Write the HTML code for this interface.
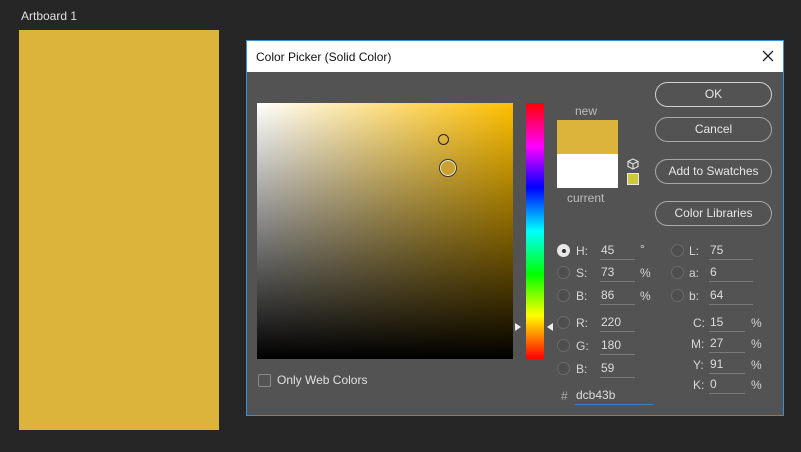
<!DOCTYPE html>
<html><head><style>
*{margin:0;padding:0;box-sizing:border-box}
body{width:801px;height:452px;background:#262626;font-family:"Liberation Sans",sans-serif;position:relative;overflow:hidden;color:#d6d6d6}
.a{position:absolute}
.t{font-size:12px;white-space:nowrap}
.btn{position:absolute;left:655px;width:117px;height:25px;border:1.5px solid #a8a8a8;border-radius:13px;color:#e6e6e6;font-size:12px;text-align:center;line-height:22px}
.r{position:absolute;width:13px;height:13px;border-radius:50%;border:1px solid #6a6a6a;background:#4e4e4e}
.in{position:absolute;height:17px;border-bottom:1px solid #7a7a7a;font-size:12px;color:#dcdcdc;padding-left:1px;line-height:15px}
</style></head><body>
<div class="a t" style="left:21px;top:9px;color:#e0e0e0">Artboard 1</div>
<div class="a" style="left:19px;top:30px;width:200px;height:400px;background:#dcb43b"></div>

<div class="a" style="left:246px;top:40px;width:538px;height:376px;border:1px solid #3d8fd0;background:#535353">
 <div class="a" style="left:0;top:0;width:536px;height:31px;background:#fff"></div>
 <div class="a t" style="left:9px;top:9px;color:#111">Color Picker (Solid Color)</div>
 <svg class="a" style="left:515px;top:9px" width="12" height="12"><path d="M1 1L11 11M11 1L1 11" stroke="#222" stroke-width="1.3"/></svg>
</div>

<div class="a" style="left:257px;top:103px;width:256px;height:256px;background:linear-gradient(to top,#000,rgba(0,0,0,0)),linear-gradient(to right,#fff,#ffbf00)"></div>
<div class="a" style="left:438px;top:134px;width:11px;height:11px;border-radius:50%;border:1.3px solid #222"></div>
<div class="a" style="left:440px;top:160px;width:16px;height:16px;border-radius:50%;border:1.5px solid #f0e6c0;background:#c9a233;box-shadow:0 0 0 1px #333"></div>

<div class="a" style="left:526px;top:103px;width:18px;height:256px;background:linear-gradient(to bottom,#f00,#f0f 17%,#00f 33%,#0ff 50%,#0f0 67%,#ff0 83%,#f00)"></div>
<svg class="a" style="left:514px;top:322px" width="40" height="10"><path d="M1 1L7 5L1 9Z" fill="#eee"/><path d="M39 1L33 5L39 9Z" fill="#eee"/></svg>

<div class="a t" style="left:575px;top:104px;color:#bdbdbd">new</div>
<div class="a" style="left:557px;top:120px;width:61px;height:34px;background:#dcb43b"></div>
<div class="a" style="left:557px;top:154px;width:61px;height:34px;background:#fff"></div>
<div class="a t" style="left:567px;top:191px;color:#bdbdbd">current</div>
<svg class="a" style="left:627px;top:158px" width="12" height="12"><path d="M6 1L11 3.5V8.5L6 11L1 8.5V3.5Z M1 3.5L6 6L11 3.5M6 6V11" stroke="#ddd" fill="none" stroke-width="1.2"/></svg>
<div class="a" style="left:627px;top:173px;width:12px;height:12px;background:#cfc83a;border:1px solid #e8e8e8"></div>

<div class="btn" style="top:82px;border-color:#d0d0d0">OK</div>
<div class="btn" style="top:117px">Cancel</div>
<div class="btn" style="top:159px">Add to Swatches</div>
<div class="btn" style="top:201px">Color Libraries</div>

<div class="a" style="left:258px;top:374px;width:13px;height:13px;border:1px solid #8a8a8a;border-radius:2px"></div>
<div class="a t" style="left:277px;top:373px;color:#e0e0e0">Only Web Colors</div>

<!-- HSB RGB -->
<div class="r" style="left:557px;top:244px;background:#e8e8e8;border-color:#e8e8e8"></div>
<div class="a" style="left:562px;top:249px;width:4px;height:4px;border-radius:50%;background:#333"></div>
<div class="r" style="left:557px;top:266px"></div>
<div class="r" style="left:557px;top:289px"></div>
<div class="r" style="left:557px;top:316px"></div>
<div class="r" style="left:557px;top:339px"></div>
<div class="r" style="left:557px;top:362px"></div>
<div class="a t" style="left:576px;top:244px">H:</div>
<div class="a t" style="left:576px;top:266px">S:</div>
<div class="a t" style="left:576px;top:289px">B:</div>
<div class="a t" style="left:576px;top:316px">R:</div>
<div class="a t" style="left:576px;top:339px">G:</div>
<div class="a t" style="left:576px;top:362px">B:</div>
<div class="in" style="left:600px;top:243px;width:35px">45</div>
<div class="in" style="left:600px;top:265px;width:35px">73</div>
<div class="in" style="left:600px;top:288px;width:35px">86</div>
<div class="in" style="left:600px;top:315px;width:35px">220</div>
<div class="in" style="left:600px;top:338px;width:35px">180</div>
<div class="in" style="left:600px;top:361px;width:35px">59</div>
<div class="a t" style="left:640px;top:242px">°</div>
<div class="a t" style="left:640px;top:266px">%</div>
<div class="a t" style="left:640px;top:289px">%</div>

<div class="r" style="left:671px;top:244px"></div>
<div class="r" style="left:671px;top:266px"></div>
<div class="r" style="left:671px;top:289px"></div>
<div class="a t" style="left:689px;top:244px">L:</div>
<div class="a t" style="left:689px;top:266px">a:</div>
<div class="a t" style="left:689px;top:289px">b:</div>
<div class="in" style="left:709px;top:243px;width:44px">75</div>
<div class="in" style="left:709px;top:265px;width:44px">6</div>
<div class="in" style="left:709px;top:288px;width:44px">64</div>

<div class="a t" style="left:693px;top:316px">C:</div>
<div class="a t" style="left:691px;top:337px">M:</div>
<div class="a t" style="left:693px;top:358px">Y:</div>
<div class="a t" style="left:693px;top:378px">K:</div>
<div class="in" style="left:709px;top:315px;width:36px">15</div>
<div class="in" style="left:709px;top:336px;width:36px">27</div>
<div class="in" style="left:709px;top:357px;width:36px">91</div>
<div class="in" style="left:709px;top:377px;width:36px">0</div>
<div class="a t" style="left:751px;top:316px">%</div>
<div class="a t" style="left:751px;top:337px">%</div>
<div class="a t" style="left:751px;top:358px">%</div>
<div class="a t" style="left:751px;top:378px">%</div>

<div class="a t" style="left:561px;top:389px;color:#aaa">#</div>
<div class="in" style="left:575px;top:388px;width:78px;border-bottom:1.5px solid #3b7fc4">dcb43b</div>
</body></html>
